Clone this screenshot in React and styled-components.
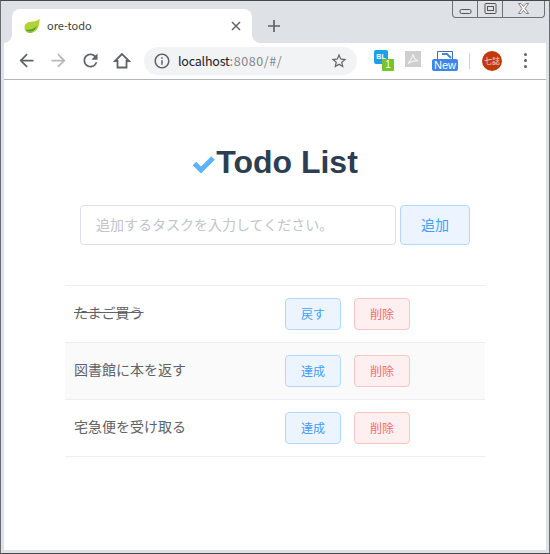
import React from 'react';
import styled, { createGlobalStyle } from 'styled-components';

const GlobalStyle = createGlobalStyle`
  html, body {
    margin: 0;
    padding: 0;
    background: #fff;
  }
  * {
    box-sizing: border-box;
  }
`;

const cjk = `"Noto Sans CJK JP", "Noto Sans", sans-serif`;

const Window_frame = styled.div`
  position: relative;
  width: 550px;
  height: 554px;
  display: flex;
  flex-direction: column;
  background: #dee1e6;
  border: 1px solid #45474a;
  border-left-color: #6a6c70;
  border-right-color: #6a6c70;
  padding: 0 3px 3px;
  font-family: ${cjk};
  overflow: hidden;
`;

const Window_controls = styled.div`
  position: absolute;
  top: -1px;
  right: 4px;
  display: flex;
  height: 18px;
  border: 1px solid #6d7075;
  border-top: none;
  border-radius: 0 0 4px 4px;
`;

const Control = styled.div`
  width: ${(p) => p.$width}px;
  display: flex;
  align-items: center;
  justify-content: center;
  border-left: ${(p) => (p.$first ? 'none' : '1px solid #6d7075')};
`;

const Minimize_icon = styled.svg`
  margin-top: 5px;
`;

const Tab_strip = styled.div`
  height: 42px;
  flex: none;
  display: flex;
  align-items: flex-end;
  padding-left: 8px;
`;

const Tab = styled.div`
  position: relative;
  width: 240px;
  height: 34px;
  background: #fff;
  border-radius: 8px 8px 0 0;
  display: flex;
  align-items: center;
  padding: 0 11px 0 12px;

  &::before,
  &::after {
    content: '';
    position: absolute;
    bottom: 0;
    width: 8px;
    height: 8px;
  }
  &::before {
    left: -8px;
    background: radial-gradient(circle at 0 0, transparent 7.5px, #fff 8px);
  }
  &::after {
    right: -8px;
    background: radial-gradient(circle at 100% 0, transparent 7.5px, #fff 8px);
  }
`;

const Favicon = styled.svg`
  flex: none;
`;

const Tab_title = styled.span`
  margin-left: 7px;
  margin-bottom: 2px;
  flex: 1;
  font-size: 11px;
  color: #3c4043;
`;

const New_tab = styled.div`
  margin-left: 16px;
  height: 34px;
  display: flex;
  align-items: center;
`;

const Toolbar = styled.div`
  height: 37px;
  flex: none;
  background: #fff;
  border-bottom: 1px solid #b4b5b7;
  display: flex;
  align-items: center;
  padding-bottom: 1px;
`;

const Nav_button = styled.div`
  width: 32px;
  height: 28px;
  display: flex;
  align-items: center;
  justify-content: center;
  flex: none;
  &:first-child {
    margin-left: 6px;
  }
`;

const Omnibox = styled.div`
  margin-left: 6px;
  width: 213px;
  height: 28px;
  border-radius: 14px;
  background: #f1f3f4;
  display: flex;
  align-items: center;
  padding: 0 9px 0 9px;
  flex: none;
`;

const Url = styled.div`
  flex: 1;
  margin-left: 7px;
  font-size: 12.5px;
  letter-spacing: -0.2px;
  color: #202124;
  white-space: nowrap;
`;

const Url_rest = styled.span`
  color: #80868b;
  letter-spacing: 0.6px;
`;

const Extensions = styled.div`
  display: flex;
  align-items: center;
  margin-left: 17px;
`;

const Badge_ext = styled.div`
  position: relative;
  width: 14px;
  height: 14px;
  margin-top: -7px;
  background: #1ea0e6;
  border-radius: 2px;
  color: #fff;
  font-size: 7px;
  font-weight: 700;
  line-height: 14px;
  text-align: center;
  font-family: 'Liberation Sans', sans-serif;
`;

const Badge_count = styled.div`
  position: absolute;
  left: 8px;
  top: 9px;
  width: 12px;
  height: 12px;
  background: #72c52a;
  border-radius: 1px;
  color: #fff;
  font-size: 10px;
  font-weight: 400;
  line-height: 12px;
`;

const Pdf_ext = styled.div`
  width: 16px;
  height: 16px;
  margin-left: 17px;
  margin-top: -3px;
  background: #cfcfcf;
  display: flex;
  align-items: center;
  justify-content: center;
`;

const New_ext = styled.div`
  position: relative;
  width: 26px;
  height: 20px;
  margin-left: 11px;
  display: flex;
  justify-content: center;
`;

const New_label = styled.div`
  position: absolute;
  left: 0;
  bottom: 0;
  width: 26px;
  height: 12px;
  background: #3f86ec;
  border-radius: 2px;
  color: #fff;
  font-size: 11px;
  line-height: 12px;
  text-align: center;
  font-family: 'Liberation Sans', sans-serif;
`;

const Divider = styled.div`
  width: 1px;
  height: 16px;
  background: #cfd1d4;
  margin-left: 11px;
`;

const Avatar = styled.div`
  width: 20px;
  height: 20px;
  margin-left: 12px;
  border-radius: 50%;
  background: #c1390b;
  color: #f6d7c8;
  font-size: 8px;
  line-height: 20px;
  text-align: center;
`;

const Menu_dots = styled.div`
  margin-left: 22px;
  display: flex;
  flex-direction: column;
  gap: 3px;
`;

const Dot = styled.div`
  width: 3px;
  height: 3px;
  border-radius: 50%;
  background: #5f6368;
`;

const Page = styled.div`
  flex: 1;
  background: #fff;
  display: flex;
  flex-direction: column;
  align-items: center;
  padding-top: 62px;
`;

const Title = styled.h1`
  margin: 0;
  height: 40px;
  display: flex;
  align-items: center;
  font-family: 'Liberation Sans', Arial, sans-serif;
  font-size: 32px;
  font-weight: 700;
  color: #2c3e50;
`;

const Title_check = styled.svg`
  width: 24px;
  height: 20px;
  margin-top: 4px;
  flex: none;
`;

const Add_form = styled.form`
  margin-top: 23px;
  width: 390px;
  display: flex;
  gap: 4px;
`;

const Task_input = styled.input`
  width: 316px;
  height: 40px;
  padding: 0 15px 3px;
  border: 1px solid #dcdfe6;
  border-radius: 4px;
  background: #fff;
  font-family: ${cjk};
  font-size: 14px;
  color: #606266;
  outline: none;

  &::placeholder {
    color: #c0c4cc;
    opacity: 1;
  }
`;

const Button = styled.button`
  width: ${(p) => (p.$large ? 70 : 56)}px;
  height: ${(p) => (p.$large ? 40 : 32)}px;
  padding: 0 0 2px;
  border: 1px solid ${(p) => (p.$danger ? '#fbc4c4' : '#b3d8ff')};
  border-radius: 4px;
  background: ${(p) => (p.$danger ? '#fef0f0' : '#ecf5ff')};
  color: ${(p) => (p.$danger ? '#f56c6c' : '#409eff')};
  font-family: ${cjk};
  font-size: ${(p) => (p.$large ? 14 : 12)}px;
  flex: none;
  cursor: pointer;
`;

const Task_table = styled.div`
  margin-top: 40px;
  width: 420px;
  border-bottom: 1px solid #ebeef5;
`;

const Task_row = styled.div`
  height: 57px;
  display: flex;
  align-items: center;
  gap: 13px;
  border-top: 1px solid #ebeef5;
  background: ${(p) => (p.$shaded ? '#fafafa' : '#fff')};
`;

const Task_name = styled.div`
  width: 207px;
  padding: 0 0 5px 9px;
  font-size: 14px;
  color: #606266;
  text-decoration: ${(p) => (p.$done ? 'line-through' : 'none')};
`;

const Icon = ({ d, fill = '#5f6368', size = 24 }) => (
  <svg width={size} height={size} viewBox="0 0 24 24">
    <path d={d} fill={fill} />
  </svg>
);

const icons = {
  back: 'M20 11H7.83l5.59-5.59L12 4l-8 8 8 8 1.41-1.41L7.83 13H20v-2z',
  forward: 'M4 11h12.17l-5.59-5.59L12 4l8 8-8 8-1.41-1.41L16.17 13H4v-2z',
  reload:
    'M17.65 6.35A7.958 7.958 0 0 0 12 4c-4.42 0-7.99 3.58-7.99 8s3.57 8 7.99 8c3.73 0 6.84-2.55 7.73-6h-2.08A5.99 5.99 0 0 1 12 18c-3.31 0-6-2.69-6-6s2.69-6 6-6c1.66 0 3.14.69 4.22 1.78L13 11h7V4l-2.35 2.35z',
  info: 'M11 7h2v2h-2zm0 4h2v6h-2zm1-9C6.48 2 2 6.48 2 12s4.48 10 10 10 10-4.48 10-10S17.52 2 12 2zm0 18c-4.41 0-8-3.59-8-8s3.59-8 8-8 8 3.59 8 8-3.59 8-8 8z',
  star: 'M22 9.24l-7.19-.62L12 2 9.19 8.63 2 9.24l5.46 4.73L5.82 21 12 17.27 18.18 21l-1.63-7.03L22 9.24zM12 15.4l-3.76 2.27 1-4.28-3.32-2.88 4.38-.38L12 6.1l1.71 4.04 4.38.38-3.32 2.88 1 4.28L12 15.4z',
};

const tasks = [
  { name: 'たまご買う', done: true },
  { name: '図書館に本を返す', done: false },
  { name: '宅急便を受け取る', done: false },
];

export default function App() {
  return (
    <>
      <GlobalStyle />
      <Window_frame>
        <Window_controls>
          <Control $width={24} $first>
            <Minimize_icon width="13" height="7" viewBox="0 0 13 7">
              <rect x="1" y="1.5" width="11" height="4" rx="1.5" fill="none" stroke="#555" />
            </Minimize_icon>
          </Control>
          <Control $width={25}>
            <svg width="13" height="11" viewBox="0 0 13 11">
              <rect x="1" y="0.5" width="11" height="10" rx="1" fill="none" stroke="#555" />
              <rect x="3.5" y="3.5" width="6" height="4" fill="none" stroke="#555" />
            </svg>
          </Control>
          <Control $width={42}>
            <svg width="13" height="11" viewBox="0 0 13 11">
              <path
                d="M1.5 0.5h2.5L6.5 3.5 9 0.5h2.5L8 5.5l3.5 5H9L6.5 7.5 4 10.5H1.5L5 5.5z"
                fill="#fff"
                stroke="#666"
                strokeWidth="0.8"
              />
            </svg>
          </Control>
        </Window_controls>

        <Tab_strip>
          <Tab>
            <Favicon width="16" height="16" viewBox="0 0 16 16">
              <path d="M15.500 0.500C16 7 13.500 14.500 6.500 15 3 15.200 0.500 13 0.500 9.500 0.500 5 4.500 3.800 8.500 3.500 11.500 3.200 14 2.500 15.500 0.500z" fill="#b2d235" />
              <path d="M1.500 11.500C5.500 12.500 10 11.500 13.200 7.500 11.800 11.500 9.500 13.200 6.500 13.500 4.500 13.700 2.800 13 1.500 11.500z" fill="#4f9a3a" />
              <path d="M2.800 13.500C4.500 14 8 14 10.500 12 9 13.800 7.800 14.800 6.500 15 5 15.100 3.800 14.500 2.800 13.500z" fill="#9cbf2e" />
            </Favicon>
            <Tab_title>ore-todo</Tab_title>
            <svg width="10" height="10" viewBox="0 0 10 10">
              <path d="M1 1l8 8M9 1l-8 8" stroke="#5f6368" strokeWidth="1.500" />
            </svg>
          </Tab>
          <New_tab>
            <svg width="12" height="12" viewBox="0 0 12 12">
              <path d="M6 0v12M0 6h12" stroke="#5f6368" strokeWidth="1.700" />
            </svg>
          </New_tab>
        </Tab_strip>

        <Toolbar>
          <Nav_button>
            <Icon d={icons.back} size={21} />
          </Nav_button>
          <Nav_button>
            <Icon d={icons.forward} fill="#b5b7ba" size={21} />
          </Nav_button>
          <Nav_button>
            <Icon d={icons.reload} size={21} />
          </Nav_button>
          <Nav_button>
            <svg width="18" height="18" viewBox="0 0 18 18">
              <path d="M9 2L2 9h2.500v6.500h9V9H16z" fill="none" stroke="#5f6368" strokeWidth="1.800" />
            </svg>
          </Nav_button>
          <Omnibox>
            <Icon d={icons.info} size={18} />
            <Url>
              localhost<Url_rest>:8080/#/</Url_rest>
            </Url>
            <Icon d={icons.star} size={18} />
          </Omnibox>
          <Extensions>
            <Badge_ext>
              BL
              <Badge_count>1</Badge_count>
            </Badge_ext>
            <Pdf_ext>
              <svg width="12" height="12" viewBox="0 0 12 12">
                <path d="M6 1c-.6 3-2.500 7-5 9.500C3.500 8.500 8 7.500 11 8 8.500 7 6.500 4 6 1z" fill="none" stroke="#f2f2f2" strokeWidth="1.200" />
              </svg>
            </Pdf_ext>
            <New_ext>
              <svg width="16" height="9" viewBox="0 0 16 9">
                <path d="M0.500 8V0.500h15V8" fill="none" stroke="#3f6fa8" />
                <path d="M5 3h5l4 4" fill="none" stroke="#4a86c8" strokeWidth="2" />
              </svg>
              <New_label>New</New_label>
            </New_ext>
            <Divider />
            <Avatar>七誌</Avatar>
            <Menu_dots>
              <Dot />
              <Dot />
              <Dot />
            </Menu_dots>
          </Extensions>
        </Toolbar>

        <Page>
          <Title>
            <Title_check viewBox="0 0 24 20">
              <path d="M2.500 9.500L9 16 21 4" fill="none" stroke="#5cb3ff" strokeWidth="5" />
            </Title_check>
            Todo List
          </Title>
          <Add_form>
            <Task_input placeholder="追加するタスクを入力してください。" />
            <Button type="button" $large>
              追加
            </Button>
          </Add_form>
          <Task_table>
            {tasks.map((task, i) => (
              <Task_row key={task.name} $shaded={i === 1}>
                <Task_name $done={task.done}>{task.name}</Task_name>
                <Button type="button">{task.done ? '戻す' : '達成'}</Button>
                <Button type="button" $danger>
                  削除
                </Button>
              </Task_row>
            ))}
          </Task_table>
        </Page>
      </Window_frame>
    </>
  );
}
